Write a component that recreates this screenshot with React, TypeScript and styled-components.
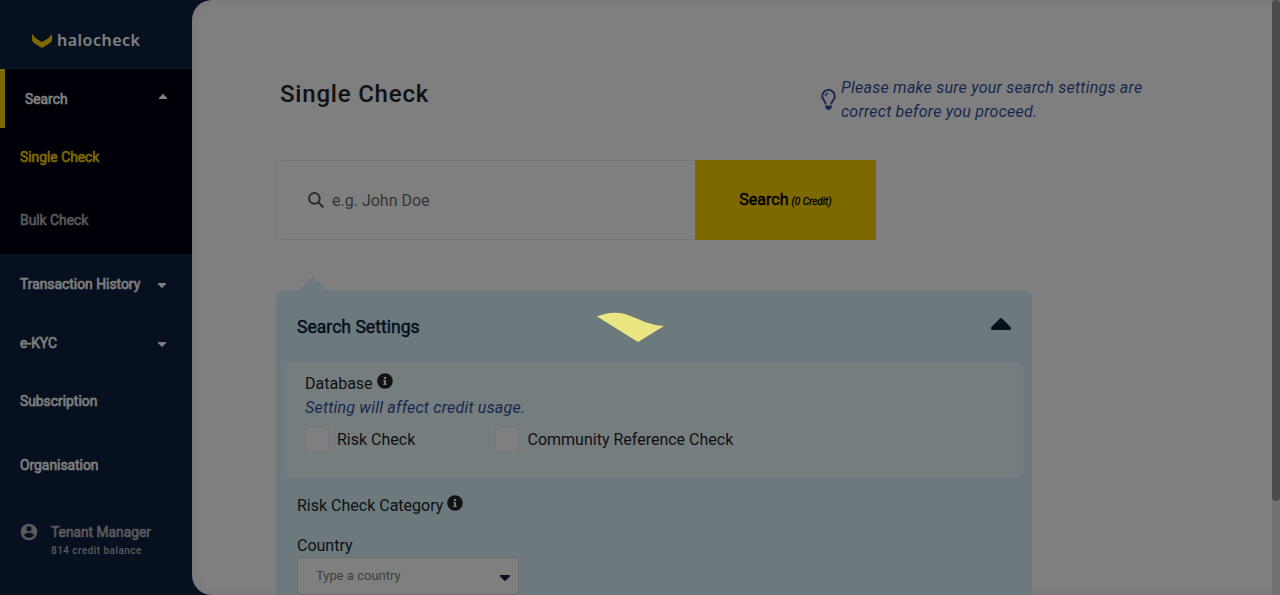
import React from 'react';
import styled, { createGlobalStyle, css } from 'styled-components';

const GlobalStyle = createGlobalStyle`
  *, *::before, *::after { box-sizing: border-box; }
  html, body { margin: 0; height: 100%; overflow: hidden; }
  body {
    background: #0e203c;
    color: #212529;
    font: 400 16px/24px Roboto, "Liberation Sans", sans-serif;
  }
`;

const Shell = styled.div`
  display: flex;
  height: 595px;
  overflow: hidden;
`;

const Sidebar = styled.nav`
  width: 192px;
  flex: none;
  display: flex;
  flex-direction: column;
  background: #0e203c;
  color: #fff;
`;

const Brand = styled.div`
  height: 69px;
  padding: 12px 0 0 32px;
  display: flex;
  align-items: center;
  gap: 5px;
  border-bottom: 1px solid #0e2c50;
  font: 600 16px/24px "Noto Sans", sans-serif;
  letter-spacing: 0.5px;
  svg { margin-top: 1px; }
`;

const SubMenu = styled.div`
  height: 185px;
  background: #000210;
`;

const bold = css`
  font-weight: 400;
  -webkit-text-stroke: 0.6px currentColor;
`;

const NavItem = styled.div<{ $height: number; $tone?: string; $active?: boolean }>`
  ${bold}
  height: ${(p) => p.$height}px;
  display: flex;
  align-items: center;
  justify-content: space-between;
  padding: 0 26px 0 20px;
  font-size: 13.85px;
  line-height: 20px;
  color: ${(p) => p.$tone ?? '#fff'};
  svg { margin-top: 3px; }
  ${(p) => p.$active && css`
    border-left: 5px solid #fad200;
    padding-right: 25px;
    svg { margin-top: -4px; }
  `}
`;

const Account = styled.div`
  margin-top: 2px;
  flex: 1;
  border-top: 1px solid #0e2c50;
  padding: 19px 0 0 19px;
  display: flex;
  align-items: flex-start;
  gap: 12px;
  color: #b4b4b8;
`;

const AccountName = styled.div`
  ${bold}
  font-size: 13.8px;
  line-height: 20px;
`;

const Balance = styled.div`
  font-size: 10px;
  font-weight: 500;
  line-height: 18px;
  letter-spacing: 0.45px;
`;

const Main = styled.main`
  flex: 1;
  display: flex;
  justify-content: space-between;
  overflow: hidden;
  background: #fff;
  border-radius: 20px 0 0 20px;
  box-shadow: inset 0 0 14px rgba(0, 0, 0, 0.08);
`;

const Content = styled.div`
  width: 960px;
  padding: 76px 0 0 84px;
  flex: none;
`;

const Header = styled.header`
  display: flex;
  justify-content: space-between;
  height: 84px;
`;

const Title = styled.h1`
  margin: 0;
  padding: 0 0 0 4px;
  font-size: 24px;
  font-weight: 500;
  line-height: 36px;
  letter-spacing: 0.8px;
`;

const Hint = styled.div`
  display: flex;
  width: 331px;
  gap: 5px;
  color: #3250a0;
  font-style: italic;
  letter-spacing: 0.24px;
  svg { margin-top: 13px; flex: none; }
`;

const SearchBar = styled.div`
  display: flex;
  width: 601px;
  height: 80px;
  margin-left: -1px;
`;

const SearchField = styled.div`
  flex: 1;
  display: flex;
  align-items: center;
  gap: 8px;
  padding: 1px 0 0 32px;
  border: 1px solid #ececf0;
  border-right: 0;
  border-radius: 6px 0 0 6px;
  color: #6c6c72;
  svg { margin-top: -1px; }
`;

const SearchButton = styled.button`
  width: 181px;
  padding: 1px 0 0;
  border: 0;
  background: #fad200;
  color: #000;
  font: 400 16px/24px Roboto, sans-serif;
  -webkit-text-stroke: 0.5px currentColor;
  em { margin-left: -1px; font-size: 10px; -webkit-text-stroke: 0.3px currentColor; }
`;

const Pointer = styled.div`
  height: 15px;
  width: 30px;
  margin: 36px 0 0 22px;
  background: #d8f4fc;
  clip-path: polygon(50% 0, 100% 100%, 0 100%);
`;

const Panel = styled.section`
  width: 756px;
  height: 500px;
  border-radius: 6px;
  background: #d8f4fc;
`;

const PanelHead = styled.div`
  height: 72px;
  display: flex;
  align-items: center;
  justify-content: space-between;
  padding: 0 21px;
  color: #0e203c;
  font-size: 17.6px;
  -webkit-text-stroke: 0.5px currentColor;
  svg { margin-top: -7px; }
`;

const Database = styled.div`
  height: 114px;
  margin: 0 9px;
  padding: 9px 20px 0;
  border-radius: 6px;
  background: #ebfafc;
`;

const Label = styled.div`
  display: flex;
  gap: 4px;
  svg { margin-top: 1px; }
`;

const Note = styled.div`
  font-style: italic;
  letter-spacing: 0.22px;
  color: #3250a0;
`;

const Checks = styled.div`
  display: flex;
  margin-top: 7px;
`;

const Check = styled.label<{ $width: number }>`
  display: flex;
  align-items: center;
  gap: 8px;
  width: ${(p) => p.$width}px;
  white-space: nowrap;
`;

const Box = styled.span`
  width: 25px;
  height: 25px;
  margin-left: -1px;
  border: 1px solid #ece8e8;
  border-radius: 4px;
  background: #fff;
`;

const Category = styled.div`
  padding: 17px 21px;
`;

const CountryLabel = styled.div`
  margin-top: 16px;
`;

const Select = styled.div`
  width: 222px;
  height: 38px;
  margin-top: -1px;
  padding: 0 8px 0 18px;
  display: flex;
  align-items: center;
  justify-content: space-between;
  border: 1px solid #dcdce0;
  border-radius: 4px;
  background: #fff;
  color: #808080;
  font-size: 13px;
  svg { margin-top: 4px; }
`;

const ScrollTrack = styled.div`
  width: 8px;
  background: #e4e4e4;
`;

const ScrollThumb = styled.div`
  height: 501px;
  border-radius: 4px;
  background: #969696;
`;

const Backdrop = styled.div`
  position: fixed;
  inset: 0;
  background: rgba(0, 0, 0, 0.5);
`;

const Loader = styled.svg`
  position: absolute;
  left: 597px;
  top: 312px;
`;

function Caret({ up, width = 8, height = 5, color = '#fff' }: { up?: boolean; width?: number; height?: number; color?: string }) {
  return (
    <svg width={width} height={height} viewBox="0 0 20 12" preserveAspectRatio="none" fill={color}>
      <path transform={up ? undefined : 'translate(0 12) scale(1 -1)'} d="M9 .5q1-.9 2 0l8.600 8.500q1 3-1 3h-17.200q-2 0-1-3z" />
    </svg>
  );
}

function InfoIcon() {
  return (
    <svg width="16" height="16" viewBox="0 0 512 512" fill="#212529">
      <path d="M256 8C119 8 8 119 8 256s111 248 248 248 248-111 248-248S393 8 256 8zm0 110a42 42 0 1 1 0 84 42 42 0 0 1 0-84zm56 254a12 12 0 0 1-12 12h-88a12 12 0 0 1-12-12v-24a12 12 0 0 1 12-12h12v-64h-12a12 12 0 0 1-12-12v-24a12 12 0 0 1 12-12h64a12 12 0 0 1 12 12v100h12a12 12 0 0 1 12 12z" />
    </svg>
  );
}

export default function App() {
  return (
    <>
      <GlobalStyle />
      <Shell>
        <Sidebar>
          <Brand>
            <svg width="20" height="14" viewBox="0 0 20 14" fill="#fad200">
              <path d="M0 0q3 4.500 10 8Q17 4.500 20 0v6.500Q19 9 10 14 1 9 0 6.500z" />
            </svg>
            halocheck
          </Brand>
          <SubMenu>
            <NavItem $height={59} $active>Search<Caret up /></NavItem>
            <NavItem $height={57} $tone="#fad200">Single Check</NavItem>
            <NavItem $height={69} $tone="#b0b0b0">Bulk Check</NavItem>
          </SubMenu>
          <NavItem $height={60}>Transaction History<Caret /></NavItem>
          <NavItem $height={58}>e-KYC<Caret /></NavItem>
          <NavItem $height={57}>Subscription</NavItem>
          <NavItem $height={71}>Organisation</NavItem>
          <Account>
            <svg width="20" height="20" viewBox="0 0 24 24" fill="currentColor">
              <path d="M12 2a10 10 0 1 0 0 20 10 10 0 0 0 0-20zm0 3a3 3 0 1 1 0 6 3 3 0 0 1 0-6zm0 14.200a7.200 7.200 0 0 1-6-3.220c.03-1.990 4-3.080 6-3.080s5.970 1.090 6 3.080a7.200 7.200 0 0 1-6 3.220z" />
            </svg>
            <div>
              <AccountName>Tenant Manager</AccountName>
              <Balance>814 credit balance</Balance>
            </div>
          </Account>
        </Sidebar>
        <Main>
          <Content>
            <Header>
              <Title>Single Check</Title>
              <Hint>
                <svg width="15" height="21" viewBox="0 0 15 21" fill="none" stroke="currentColor" strokeWidth="1.900">
                  <path d="M4.900 15.500C4.700 12.200 1.200 10.700 1.200 7.200a6.300 6.300 0 0 1 12.600 0c0 3.500-3.500 5-3.700 8.300" />
                  <path d="M4.400 7.200q0-2.700 2.800-2.900" strokeWidth="1.200" />
                  <path d="M4.200 16.600h6.600v1.800L8.900 20.700H6.100L4.200 18.400z" fill="currentColor" stroke="none" />
                </svg>
                <span>Please make sure your search settings are correct before you proceed.</span>
              </Hint>
            </Header>
            <SearchBar>
              <SearchField>
                <svg width="16" height="16" viewBox="0 0 16 16" fill="none" stroke="#58585f" strokeWidth="2">
                  <circle cx="6.400" cy="6.400" r="5.300" />
                  <path d="M10.300 10.300l5 5" strokeWidth="2.200" />
                </svg>
                e.g. John Doe
              </SearchField>
              <SearchButton>Search <em>(0 Credit)</em></SearchButton>
            </SearchBar>
            <Pointer />
            <Panel>
              <PanelHead>Search Settings<Caret up width={20} height={12} color="#0e203c" /></PanelHead>
              <Database>
                <Label>Database<InfoIcon /></Label>
                <Note>Setting will affect credit usage.</Note>
                <Checks>
                  <Check $width={190.5}><Box />Risk Check</Check>
                  <Check $width={260}><Box />Community Reference Check</Check>
                </Checks>
              </Database>
              <Category>
                <Label>Risk Check Category<InfoIcon /></Label>
                <CountryLabel>Country</CountryLabel>
                <Select>Type a country<Caret width={10} height={6} color="#0e203c" /></Select>
              </Category>
            </Panel>
          </Content>
          <ScrollTrack><ScrollThumb /></ScrollTrack>
        </Main>
      </Shell>
      <Backdrop>
        <Loader width="68" height="31" viewBox="0 0 68 31">
          <path d="M0 4.500C12-.5 25-1 37 5.500 48 10 54 13 67 14L41 30z" fill="#ebe682" />
        </Loader>
      </Backdrop>
    </>
  );
}
